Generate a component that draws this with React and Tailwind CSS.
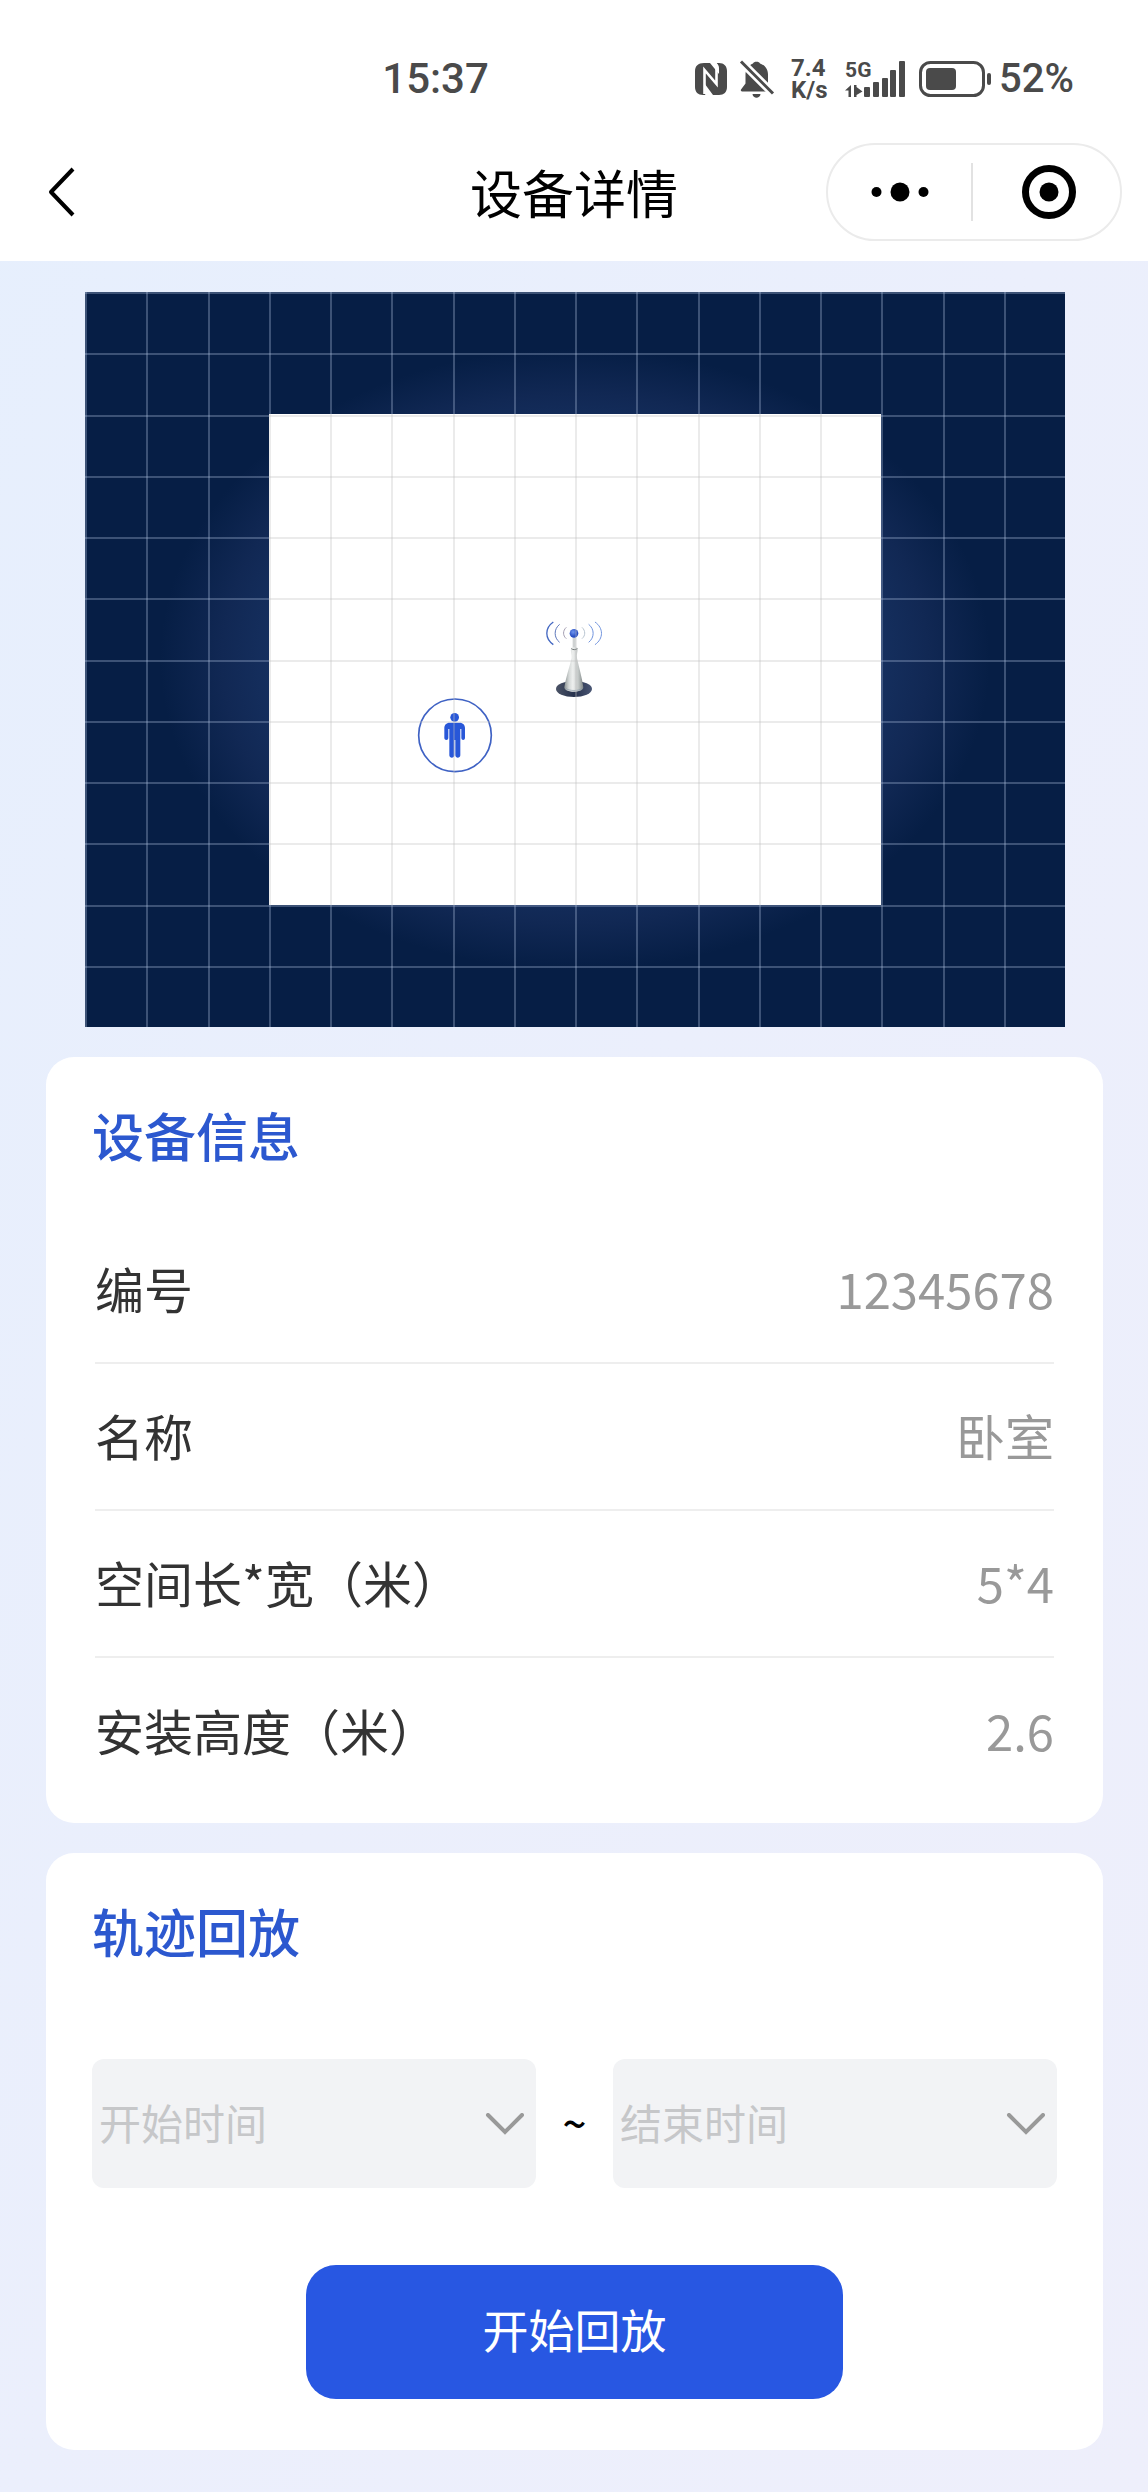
import React from "react";

const CELL = 61.25;

function NfcIcon() {
  return (
    <svg className="h-8 w-8 shrink-0" viewBox="0 0 32 32" aria-label="NFC">
      <path
        d="M9 0h6l9 11V5c0-2-1-4-2.500-5H24c5 0 8 3 8 8v16c0 5-3 8-8 8h-6L9.500 20.500V28c0 1.500.5 3 1.500 4H8c-5 0-8-3-8-8V8c0-5 3-8 9-8z"
        fill="#4a4a4a"
      />
      <path d="M9.500 31V7l12 14V4c0-2-1-3.500-2.500-4M9.500 7v18c0 3 1 5 2.500 6.500" fill="none" stroke="#fff" strokeWidth="2.600" />
    </svg>
  );
}

function MutedBellIcon() {
  return (
    <svg className="h-10 w-9 shrink-0" viewBox="0 0 36 40" aria-label="静音">
      <path
        d="M14 4.500c.5-2.500 6.500-2.500 7 0 5 1.500 8 6 8 11v9l4 6c.5 1 0 2-1 2H3c-1 0-1.500-1-1-2l4.500-6v-9c0-5 3-9.500 7.500-11z"
        fill="#4a4a4a"
      />
      <path d="M13.500 35h8c-.5 5-7.500 5-8 0z" fill="#4a4a4a" />
      <path d="M1 1.500 34 34.500" stroke="#fff" strokeWidth="8" />
      <path d="M2 2.500 34 34.500" stroke="#4a4a4a" strokeWidth="3" />
    </svg>
  );
}

function SignalIcon() {
  return (
    <div className="relative h-10 w-[60px] shrink-0">
      <span className="absolute top-0 left-0 text-[21px] leading-[22px] font-bold">5G</span>
      <svg className="h-10 w-[60px]" viewBox="0 0 60 40" fill="#4a4a4a" aria-hidden="true">
        <path d="M0 31.500 6 26v12H3.500v-6.500zM9 26h2.500v2l6 4.500-6 3.500v2H9z" />
        <rect x="19" y="28" width="6" height="10" rx="1" />
        <rect x="28" y="23" width="6" height="15" rx="1" />
        <rect x="37" y="19" width="6" height="19" rx="1" />
        <rect x="45" y="11" width="6" height="27" rx="1" />
        <rect x="54" y="2" width="6" height="36" rx="1" />
      </svg>
    </div>
  );
}

function BatteryIcon() {
  return (
    <svg className="h-9 w-[72px] shrink-0" viewBox="0 0 72 36" aria-hidden="true">
      <rect x="1.500" y="1.500" width="63" height="33" rx="10" fill="none" stroke="#4a4a4a" strokeWidth="3" />
      <rect x="7" y="7" width="30" height="22" rx="4" fill="#4a4a4a" />
      <rect x="68" y="12" width="4" height="12" rx="2" fill="#4a4a4a" />
    </svg>
  );
}

function StatusBar() {
  return (
    <div className="flex h-[123px] items-center justify-between pt-[34px] pr-[74px] pl-[33.3%] font-[Roboto,sans-serif] text-[#4a4a4a]">
      <span className="text-[42px] leading-none font-medium">15:37</span>
      <div className="flex items-center">
        <NfcIcon />
        <div className="ml-3">
          <MutedBellIcon />
        </div>
        <div className="ml-4 flex w-[42px] flex-col text-[24px] leading-[22px] font-bold">
          <span>7.4</span>
          <span>K/s</span>
        </div>
        <div className="mr-[14px] ml-3">
          <SignalIcon />
        </div>
        <BatteryIcon />
        <span className="ml-2 text-[40px] leading-none font-medium">52%</span>
      </div>
    </div>
  );
}

function TitleBar() {
  return (
    <header className="grid h-[138px] grid-cols-[1fr_auto_1fr] items-center px-[26px]">
      <button type="button" aria-label="返回" className="ml-5 w-8">
        <svg className="h-[50px] w-8" viewBox="0 0 32 50" fill="none" stroke="#000" strokeWidth="4">
          <path d="M27 2 5 25l22 23" strokeLinejoin="round" />
        </svg>
      </button>
      <h1 className="text-[52px] leading-none text-black">设备详情</h1>
      <div className="flex h-[98px] w-[296px] items-center justify-self-end rounded-full border-2 border-[#ebebeb]">
        <button type="button" aria-label="更多" className="flex flex-1 justify-center">
          <svg className="h-5 w-[58px]" viewBox="0 0 58 20">
            <circle cx="5.500" cy="10" r="5" />
            <circle cx="29" cy="10" r="9.500" />
            <circle cx="52.500" cy="10" r="5" />
          </svg>
        </button>
        <span className="h-[58px] w-[2px] bg-[#e2e2e2]" />
        <button type="button" aria-label="关闭" className="flex flex-1 justify-center pl-1">
          <svg className="h-[54px] w-[54px]" viewBox="0 0 54 54">
            <circle cx="27" cy="27" r="23.500" fill="none" stroke="#000" strokeWidth="7" />
            <circle cx="27" cy="27" r="9.500" />
          </svg>
        </button>
      </div>
    </header>
  );
}

function GridLines(props) {
  return (
    <g {...props}>
      {Array.from({ length: 16 }, (_, i) => (
        <rect key={`v${i}`} x={Math.round(i * CELL)} y="0" width="2" height="735" />
      ))}
      {Array.from({ length: 12 }, (_, i) => (
        <rect key={`h${i}`} x="0" y={Math.round(i * CELL)} width="980" height="2" />
      ))}
    </g>
  );
}

function RoomMap() {
  return (
    <svg className="block w-full" viewBox="0 0 980 735" role="img" aria-label="空间平面图">
      <defs>
        <radialGradient id="glow">
          <stop offset="0" stopColor="#1c3d78" />
          <stop offset="0.7" stopColor="#163161" />
          <stop offset="0.85" stopColor="#112854" />
          <stop offset="1" stopColor="#061e45" />
        </radialGradient>
        <linearGradient id="cone" x1="0" x2="1">
          <stop offset="0" stopColor="#8d9494" />
          <stop offset="0.25" stopColor="#d5d9d8" />
          <stop offset="0.45" stopColor="#eef0ef" />
          <stop offset="0.75" stopColor="#bfc4c3" />
          <stop offset="1" stopColor="#7f8686" />
        </linearGradient>
        <linearGradient id="base" x1="0" x2="1">
          <stop offset="0" stopColor="#4b5366" />
          <stop offset="0.5" stopColor="#27324d" />
          <stop offset="1" stopColor="#4a5674" />
        </linearGradient>
        <radialGradient id="ball" cx="0.4" cy="0.35">
          <stop offset="0" stopColor="#6f95ee" />
          <stop offset="1" stopColor="#2a50c4" />
        </radialGradient>
        <clipPath id="room">
          <rect x="184" y="122" width="612" height="491" />
        </clipPath>
      </defs>

      <rect width="980" height="735" fill="#061e45" />
      <ellipse cx="490" cy="367" rx="415" ry="311" fill="url(#glow)" />
      <GridLines fill="#a9bbdb" fillOpacity="0.33" />
      <rect x="184" y="122" width="612" height="491" fill="#fff" />

      <g transform="translate(295 298) scale(0.3333)">
        <circle cx="225" cy="436" r="109" fill="#fff" stroke="#3f62c4" strokeWidth="5" />
        <g fill="#2857d8">
          <circle cx="224" cy="382" r="13" />
          <path d="M209 398h30c10 0 16 7 16 16v30c0 8-11 8-11 0v-27h-3v79c0 10-15 10-15 0v-46h-3v46c0 10-15 10-15 0v-79h-3v27c0 8-12 8-12 0v-30c0-9 6-16 16-16z" />
        </g>

        <g fill="none" stroke="#6f93dd" strokeWidth="3">
          <path d="M520 96c-26 18-26 50 0 68" stroke="#4468c2" strokeWidth="4" />
          <path d="M539 103c-18 14-18 40 0 54" stroke="#5c76ba" />
          <path d="M559 112c-11 10-11 25 0 34" stroke="#a39db0" />
          <path d="M606 112c11 10 11 25 0 34" stroke="#b7c3cf" />
          <path d="M626 103c18 14 18 40 0 54" />
          <path d="M645 96c26 18 26 50 0 68" />
        </g>
        <ellipse cx="582" cy="297" rx="54" ry="24" fill="url(#base)" />
        <path d="M578 138h9v38h-9z" fill="#cfd2d2" />
        <path
          d="M573 174c5-3 15-3 20 0 1 12-4 18-2 30 7 32 15 58 19 88 0 18-57 18-57 0 5-30 14-56 22-88 1-12-4-18-2-30z"
          fill="url(#cone)"
        />
        <path d="M556 294c10 10 42 10 52 0" fill="none" stroke="#8b9aa8" strokeWidth="2" />
        <path d="M574 176c5 4 13 4 18 0" fill="none" stroke="#6d7373" strokeWidth="3" />
        <circle cx="582" cy="130" r="13" fill="url(#ball)" />
      </g>

      <GridLines fill="#bebebe" fillOpacity="0.3" clipPath="url(#room)" />
    </svg>
  );
}

const details = [
  ["编号", "12345678"],
  ["名称", "卧室"],
  ["空间长*宽（米）", "5*4"],
  ["安装高度（米）", "2.6"],
];

function Card({ title, children }) {
  return (
    <section className="rounded-[28px] bg-white px-[46px] pt-[52px]">
      <h2 className="text-[52px] leading-[52px] font-medium text-[#2c58cf]">{title}</h2>
      {children}
    </section>
  );
}

function TimeSelect({ label }) {
  return (
    <div className="relative flex-1">
      <select
        aria-label={label}
        defaultValue=""
        className="h-[129px] w-full appearance-none rounded-xl bg-[#f2f3f5] pr-16 pb-1 pl-[7px] text-[42px] text-[#c6c7c9] outline-none"
      >
        <option value="">{label}</option>
      </select>
      <svg
        className="pointer-events-none absolute top-[54px] right-[11px] h-[22px] w-10"
        viewBox="0 0 40 22"
        fill="none"
        stroke="#999"
        strokeWidth="4"
        strokeLinecap="round"
        aria-hidden="true"
      >
        <path d="m3 2 17 17L37 2" />
      </svg>
    </div>
  );
}

export default function App() {
  return (
    <div className="min-h-screen bg-linear-to-br from-[#e6effd] via-[#ebeffc] to-[#eeeffb] font-['Noto_Sans_CJK_SC','Noto_Sans',sans-serif]">
      <div className="bg-white">
        <StatusBar />
        <TitleBar />
      </div>
      <main className="flex flex-col gap-[30px] pt-[31px] pr-[45px] pb-[41px] pl-[46px]">
        <div className="pr-[38px] pl-[39px]">
          <RoomMap />
        </div>

        <Card title="设备信息">
          <dl className="pt-[56px] pb-[18px]">
            {details.map(([name, value]) => (
              <div
                key={name}
                className="mx-[3px] flex h-[147px] items-center justify-between border-b-2 border-[#eeeeee] pb-1 text-[49px] leading-none last:border-b-0"
              >
                <dt className="text-[#333]">{name}</dt>
                <dd className="text-[#999]">{value}</dd>
              </div>
            ))}
          </dl>
        </Card>

        <Card title="轨迹回放">
          <form className="flex flex-col items-center pt-[102px] pb-[51px]" onSubmit={(e) => e.preventDefault()}>
            <div className="flex w-full items-center">
              <TimeSelect label="开始时间" />
              <span className="w-[77px] pb-1 text-center text-[42px] leading-none font-medium text-black">~</span>
              <TimeSelect label="结束时间" />
            </div>
            <button
              type="submit"
              className="mt-[77px] h-[134px] w-5/9 rounded-[30px] bg-[#2857e2] pb-2 text-[46px] leading-none text-white"
            >
              开始回放
            </button>
          </form>
        </Card>
      </main>
    </div>
  );
}
